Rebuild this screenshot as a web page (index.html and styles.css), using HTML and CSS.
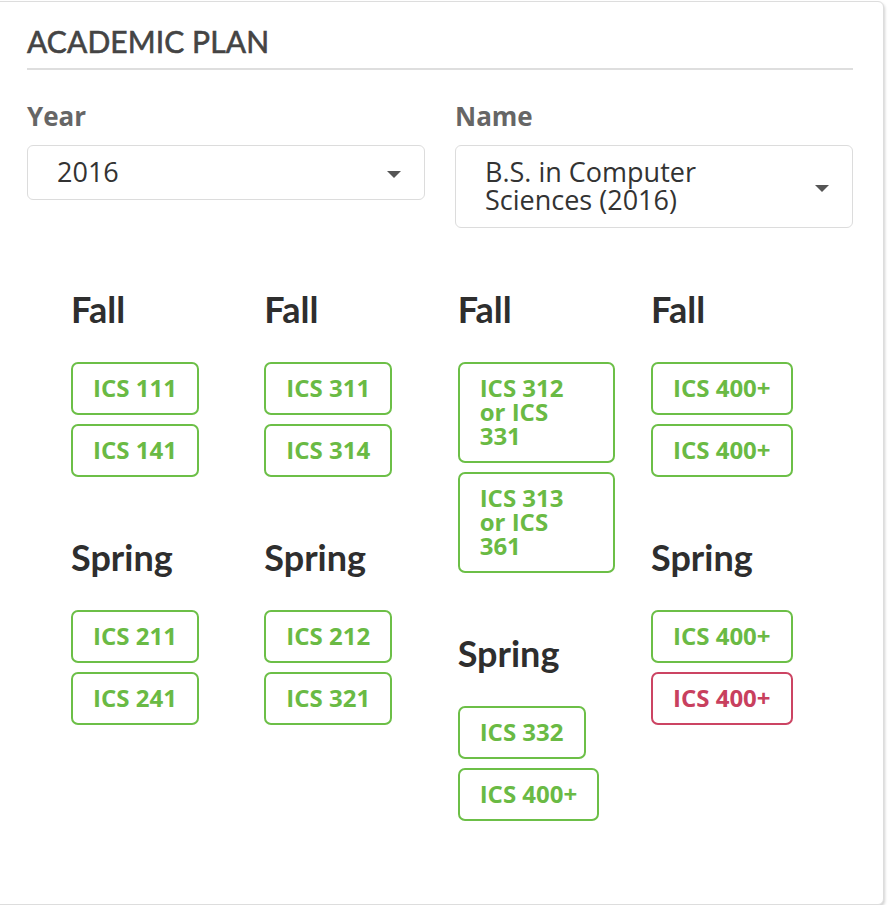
FILE: index.html
```html
<!DOCTYPE html>
<html>
<head>
<meta charset="utf-8">
<link rel="stylesheet" href="styles.css">
</head>
<body>
<div class="card">
  <h2 class="title">ACADEMIC PLAN</h2>
  <div class="form-row">
    <div class="field">
      <div class="label">Year</div>
      <div class="select">
        <span class="select-text">2016</span>
        <span class="caret"></span>
      </div>
    </div>
    <div class="field">
      <div class="label">Name</div>
      <div class="select">
        <span class="select-text">B.S. in Computer Sciences (2016)</span>
        <span class="caret"></span>
      </div>
    </div>
  </div>
  <div class="plan">
    <div class="year">
      <div class="semester">
        <h3 class="sem-title">Fall</h3>
        <div class="course">ICS 111</div>
        <div class="course">ICS 141</div>
      </div>
      <div class="semester">
        <h3 class="sem-title">Spring</h3>
        <div class="course">ICS 211</div>
        <div class="course">ICS 241</div>
      </div>
    </div>
    <div class="year">
      <div class="semester">
        <h3 class="sem-title">Fall</h3>
        <div class="course">ICS 311</div>
        <div class="course">ICS 314</div>
      </div>
      <div class="semester">
        <h3 class="sem-title">Spring</h3>
        <div class="course">ICS 212</div>
        <div class="course">ICS 321</div>
      </div>
    </div>
    <div class="year">
      <div class="semester">
        <h3 class="sem-title">Fall</h3>
        <div class="course course-wide">ICS 312 or ICS 331</div>
        <div class="course course-wide">ICS 313 or ICS 361</div>
      </div>
      <div class="semester">
        <h3 class="sem-title">Spring</h3>
        <div class="course">ICS 332</div>
        <div class="course">ICS 400+</div>
      </div>
    </div>
    <div class="year">
      <div class="semester">
        <h3 class="sem-title">Fall</h3>
        <div class="course">ICS 400+</div>
        <div class="course">ICS 400+</div>
      </div>
      <div class="semester">
        <h3 class="sem-title">Spring</h3>
        <div class="course">ICS 400+</div>
        <div class="course course-missing">ICS 400+</div>
      </div>
    </div>
  </div>
</div>
</body>
</html>
```
FILE: styles.css
```css
html, body {
  margin: 0;
  padding: 0;
  background: #ffffff;
}

body {
  overflow: hidden;
  font-family: "Open Sans", "Liberation Sans", sans-serif;
}

.card {
  box-sizing: border-box;
  width: 894px;
  height: 904px;
  margin: 1px 0 0 -10px;
  padding: 21px 30px 0 36px;
  background: #ffffff;
  border: 1px solid #dddddd;
  border-radius: 6px;
  box-shadow: 1px 2px 3px rgba(0, 0, 0, 0.18);
}

.title {
  margin: 0;
  padding-bottom: 9px;
  border-bottom: 2px solid #dedede;
  font-family: "Lato", "Liberation Sans", sans-serif;
  font-weight: 400;
  font-size: 30px;
  line-height: 36px;
  color: #444444;
  -webkit-text-stroke: 0.6px #444444;
  letter-spacing: 0.1px;
}

.form-row {
  display: grid;
  grid-template-columns: 398px 398px;
  column-gap: 30px;
  margin-top: 30px;
}

.label {
  font-weight: 700;
  font-size: 26px;
  line-height: 32px;
  color: #666666;
  margin-bottom: 13px;
}

.select {
  display: flex;
  align-items: center;
  justify-content: space-between;
  border: 1px solid #dcdcdc;
  border-radius: 6px;
  padding: 12px 23px 13px 29px;
}

.select-text {
  font-size: 27px;
  line-height: 28px;
  color: #333333;
  padding-right: 70px;
}

.caret {
  flex: none;
  width: 0;
  height: 0;
  border-left: 7px solid transparent;
  border-right: 7px solid transparent;
  border-top: 7px solid #555555;
  margin-top: 5px;
}

.plan {
  display: grid;
  grid-template-columns: repeat(4, 193.33px);
  padding-left: 44px;
  margin-top: 61px;
}

.year {
  display: flex;
  flex-direction: column;
  align-items: flex-start;
}

.semester {
  display: flex;
  flex-direction: column;
  align-items: flex-start;
  margin-bottom: 51px;
}

.semester:last-child {
  margin-bottom: 0;
}

.sem-title {
  margin: 0 0 33px 0;
  font-family: "Lato", "Liberation Sans", sans-serif;
  font-weight: 700;
  font-size: 36px;
  line-height: 40px;
  color: #2e2e2e;
}

.course {
  box-sizing: border-box;
  border: 2px solid #6cbf47;
  border-radius: 7px;
  padding: 12px 20px 13px 20px;
  margin-bottom: 9px;
  font-weight: 700;
  font-size: 24px;
  line-height: 24px;
  color: #6aba44;
  white-space: nowrap;
}

.course-wide {
  width: 157px;
  padding-right: 40px;
  white-space: normal;
}

.course-missing {
  border-color: #cc4463;
  color: #c8405e;
}
```
